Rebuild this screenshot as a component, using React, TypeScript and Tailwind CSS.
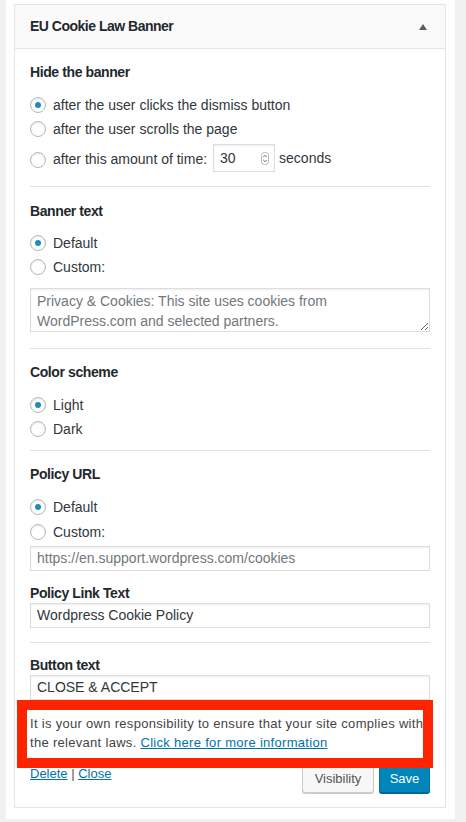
import React from "react";

const font = { fontFamily: '"Liberation Sans", Arial, sans-serif' };

const Radio: React.FC<{ checked?: boolean }> = ({ checked }) => (
  <span className="flex h-[16px] w-[16px] shrink-0 items-center justify-center rounded-full border border-[#b4b9be] bg-white shadow-[inset_0_1px_2px_rgba(0,0,0,0.1)]">
    {checked && <span className="h-[6px] w-[6px] rounded-full bg-[#1e8cbe]" />}
  </span>
);

const RadioRow: React.FC<{ checked?: boolean; label: string; className?: string }> = ({
  checked,
  label,
  className = "",
}) => (
  <div className={`flex h-[24px] items-center gap-[7px] ${className}`}>
    <Radio checked={checked} />
    <span className="text-[14px] text-[#32373c]">{label}</span>
  </div>
);

const Label: React.FC<{ children: React.ReactNode; className?: string; tight?: boolean }> = ({
  children,
  className = "",
  tight,
}) => (
  <div
    className={`text-[14px] font-semibold tracking-[-0.4px] text-[#23282d] ${
      tight ? "leading-[18px]" : "leading-[20px]"
    } ${className}`}
  >
    {children}
  </div>
);

const TextBox: React.FC<{ value: string; muted?: boolean; className?: string }> = ({
  value,
  muted,
  className = "",
}) => (
  <div
    className={`flex h-[25px] items-center border border-[#dddddd] bg-white px-[6px] text-[14px] shadow-[inset_0_1px_2px_rgba(0,0,0,0.07)] ${
      muted ? "text-[#72777c]" : "text-[#32373c]"
    } ${className}`}
  >
    {value}
  </div>
);

const Divider: React.FC<{ className?: string }> = ({ className = "" }) => (
  <div className={`h-px bg-[#e1e1e1] ${className}`} />
);

export default function App() {
  return (
    <div className="min-h-[822px] bg-[#f1f1f1] pb-[3px] pl-[6px] pr-[11px]" style={font}>
      <div className="bg-white pb-[11px] pl-[8px] pr-[9px] pt-[4px]">
        <div className="border border-[#e5e5e5] bg-white">
          {/* header */}
          <div className="flex h-[44px] items-center justify-between border-b border-[#e5e5e5] bg-[#fafafa] pl-[15px] pr-[18px]">
            <span className="text-[14px] font-semibold tracking-[-0.5px] text-[#23282d]">EU Cookie Law Banner</span>
            <svg width="8" height="6" viewBox="0 0 8 6">
              <path d="M0 6 L4 0 L8 6 Z" fill="#555d66" />
            </svg>
          </div>

          <div className="px-[15px] pb-[14px]">
            {/* hide the banner */}
            <Label className="mt-[13px]">Hide the banner</Label>
            <RadioRow className="mt-[11px]" checked label="after the user clicks the dismiss button" />
            <RadioRow label="after the user scrolls the page" />
            <div className="mt-[3px] flex h-[28px] items-center">
              <span className="mt-[3px] flex">
                <Radio />
              </span>
              <span className="ml-[7px] mt-[3px] text-[14px] text-[#32373c]">after this amount of time:</span>
              <div className="ml-[6px] flex h-[28px] w-[62px] items-center justify-between border border-[#dddddd] bg-white pl-[6px] pr-[5px] text-[14px] text-[#32373c] shadow-[inset_0_1px_2px_rgba(0,0,0,0.07)]">
                <span>30</span>
                <svg width="8" height="13" viewBox="0 0 8 13">
                  <rect x="0.5" y="0.5" width="7" height="12" rx="3" fill="none" stroke="#b9b9b9" />
                  <path d="M2.3 5 L4 3.3 L5.7 5" fill="none" stroke="#555" strokeWidth="0.9" />
                  <path d="M2.3 8 L4 9.7 L5.7 8" fill="none" stroke="#555" strokeWidth="0.9" />
                </svg>
              </div>
              <span className="ml-[4px] text-[14px] text-[#32373c]">seconds</span>
            </div>
            <Divider className="mt-[14px]" />

            {/* banner text */}
            <Label className="mt-[14px]">Banner text</Label>
            <RadioRow className="mt-[10px]" checked label="Default" />
            <RadioRow label="Custom:" />
            <textarea
              readOnly
              className="mt-[9px] block h-[44px] w-full border border-[#dddddd] bg-white px-[6px] py-[2px] text-[14px] leading-[20px] text-[#72777c] shadow-[inset_0_1px_2px_rgba(0,0,0,0.07)] outline-none"
              style={font}
              value="Privacy & Cookies: This site uses cookies from WordPress.com and selected partners."
            />
            <Divider className="mt-[16px]" />

            {/* color scheme */}
            <Label className="mt-[13px]">Color scheme</Label>
            <RadioRow className="mt-[11px]" checked label="Light" />
            <RadioRow label="Dark" />
            <Divider className="mt-[9px]" />

            {/* policy url */}
            <Label className="mt-[13px]">Policy URL</Label>
            <RadioRow className="mt-[11px]" checked label="Default" />
            <RadioRow className="mt-[1px]" label="Custom:" />
            <TextBox className="mt-[2px]" muted value="https://en.support.wordpress.com/cookies" />
            <Label className="mt-[13px]" tight>
              Policy Link Text
            </Label>
            <TextBox className="mt-[1px]" value="Wordpress Cookie Policy" />
            <Divider className="mt-[14px]" />

            {/* button text */}
            <Label className="mt-[13px]" tight>
              Button text
            </Label>
            <TextBox className="mt-[1px]" value="CLOSE & ACCEPT" />

            <div className="relative mt-[14px]">
              <p className="text-[13px] leading-[19px] tracking-[0.3px] text-[#444]">
                It is your own responsibility to ensure that your site complies with the relevant laws.{" "}
                <a className="text-[#0073aa] underline">Click here for more information</a>
              </p>
              <div className="pointer-events-none absolute -left-[13px] -top-[14px] z-10 h-[68px] w-[416px] border-[10px] border-[#ff2400]" />
            </div>

            <div className="mt-[13px] flex items-start justify-between">
              <div className="text-[13px] leading-[18px] text-[#555]">
                <a className="text-[#0073aa] underline">Delete</a> | <a className="text-[#0073aa] underline">Close</a>
              </div>
              <div className="flex gap-[5px]">
                <button className="h-[28px] w-[72px] rounded-[3px] border border-[#cccccc] bg-[#f7f7f7] text-[13px] text-[#555] shadow-[0_1px_0_#cccccc]">
                  Visibility
                </button>
                <button className="h-[28px] w-[51px] rounded-[3px] border border-[#0073aa] border-b-[#006799] bg-[#0085ba] text-[13px] text-white shadow-[0_1px_0_#006799]">
                  Save
                </button>
              </div>
            </div>
          </div>
        </div>
      </div>
    </div>
  );
}
